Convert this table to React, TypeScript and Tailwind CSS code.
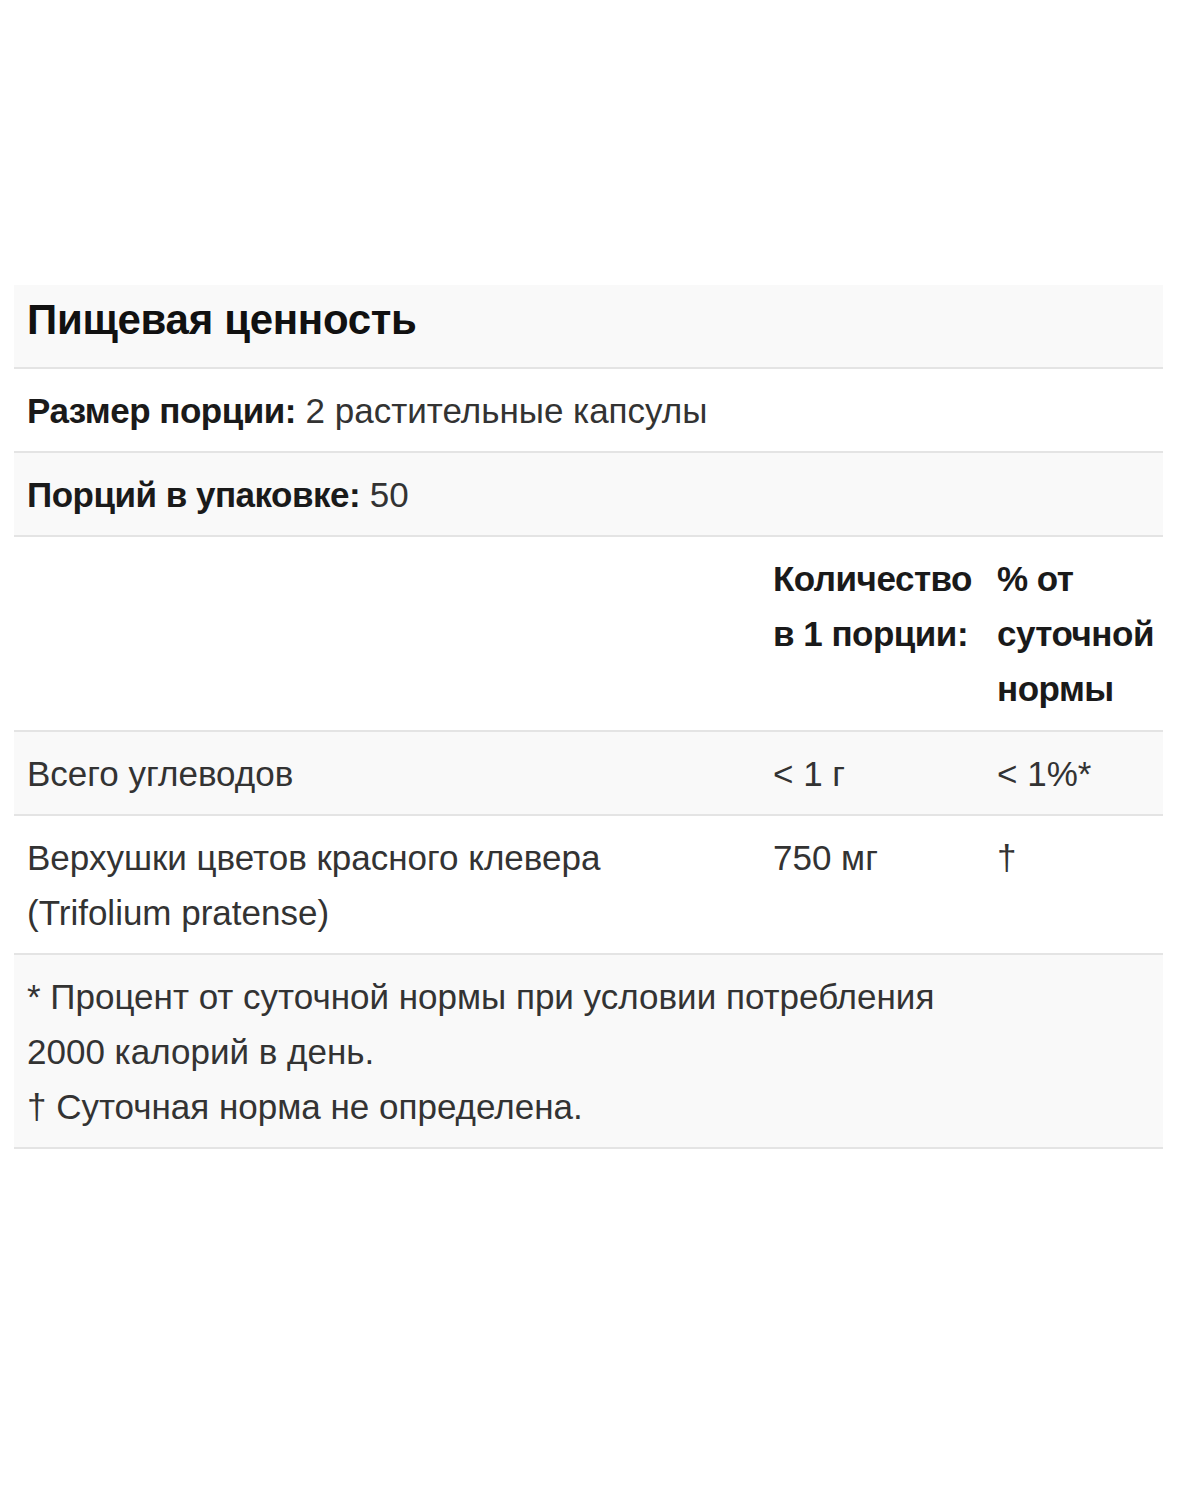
const rows = [
  { name: "Всего углеводов", amount: "< 1 г", dv: "< 1%*", shaded: true },
  {
    name: "Верхушки цветов красного клевера (Trifolium pratense)",
    amount: "750 мг",
    dv: "†",
    shaded: false,
  },
];

export default function App() {
  return (
    <div className="min-h-[1500px] w-[1200px] bg-white pt-[285px] font-['Liberation_Sans',Arial,sans-serif] text-[35px] leading-[55px] text-[#333]">
      <div className="ml-[14px] w-[1149px]">
        <div className="border-b-2 border-[#e4e4e4] bg-[#f9f9f9] px-[13px] pb-[20px] pt-[7px]">
          <h2 className="text-[42px] font-bold tracking-[-0.3px] text-[#111]">Пищевая ценность</h2>
        </div>
        <div className="border-b-2 border-[#e4e4e4] bg-white px-[13px] pb-[13px] pt-[14px]">
          <span className="font-bold tracking-[-0.5px] text-[#1a1a1a]">Размер порции:</span> 2 растительные капсулы
        </div>
        <div className="border-b-2 border-[#e4e4e4] bg-[#f9f9f9] px-[13px] pb-[13px] pt-[14px]">
          <span className="font-bold tracking-[-0.5px] text-[#1a1a1a]">Порций в упаковке:</span> 50
        </div>
        <div className="grid grid-cols-[746px_224px_1fr] border-b-2 border-[#e4e4e4] bg-white pb-[14px] pt-[14px] font-bold tracking-[-0.5px] text-[#1a1a1a]">
          <div />
          <div className="px-[13px]">
            Количество
            <br />в 1 порции:
          </div>
          <div className="px-[13px]">% от суточной нормы</div>
        </div>
        {rows.map((r) => (
          <div
            key={r.name}
            className={`grid grid-cols-[746px_224px_1fr] border-b-2 border-[#e4e4e4] pb-[13px] pt-[14px] ${r.shaded ? "bg-[#f9f9f9]" : "bg-white"}`}
          >
            <div className="px-[13px] pr-[100px]">{r.name}</div>
            <div className="px-[13px]">{r.amount}</div>
            <div className="px-[13px]">{r.dv}</div>
          </div>
        ))}
        <div className="border-b-2 border-[#e4e4e4] bg-[#f9f9f9] px-[13px] pb-[13px] pt-[14px]">
          <p className="w-[960px]">* Процент от суточной нормы при условии потребления 2000 калорий в день.</p>
          <p>† Суточная норма не определена.</p>
        </div>
      </div>
    </div>
  );
}
